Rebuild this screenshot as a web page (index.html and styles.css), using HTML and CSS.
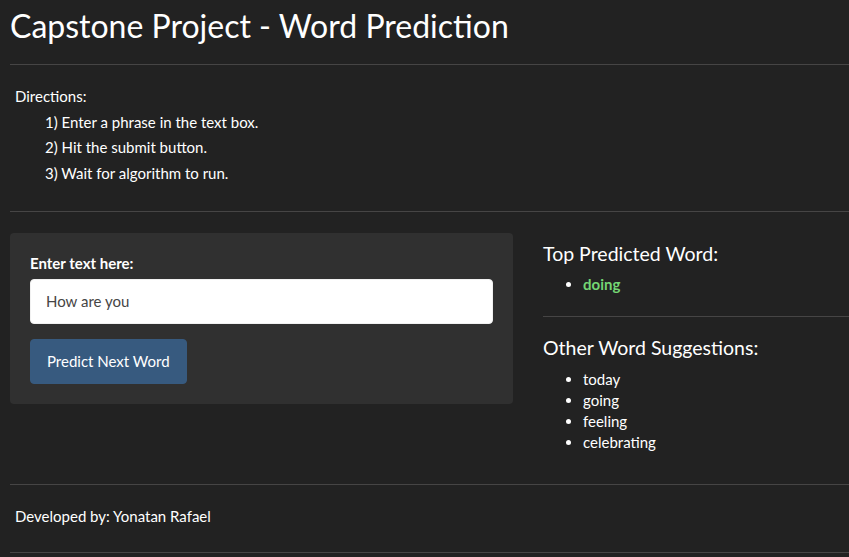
FILE: index.html
```html
<!DOCTYPE html>
<html>
<head>
<meta charset="utf-8">
<title>Capstone Project - Word Prediction</title>
<link rel="stylesheet" href="styles.css">
</head>
<body>
<div class="page">
  <h2 class="title">Capstone Project - Word Prediction</h2>
  <hr class="rule rule-top">
  <div class="directions">
    <div class="line">Directions:</div>
    <div class="line indent">1) Enter a phrase in the text box.</div>
    <div class="line indent">2) Hit the submit button.</div>
    <div class="line indent">3) Wait for algorithm to run.</div>
  </div>
  <hr class="rule rule-mid">
  <div class="row">
    <div class="sidebar">
      <div class="well">
        <div class="form-group">
          <label class="label" for="txt">Enter text here:</label>
          <input id="txt" class="input" type="text" value="How are you">
        </div>
        <button class="btn">Predict Next Word</button>
      </div>
    </div>
    <div class="main">
      <h4 class="heading">Top Predicted Word:</h4>
      <ul class="list list-top">
        <li><span class="top-word">doing</span></li>
      </ul>
      <hr class="rule rule-inner">
      <h4 class="heading">Other Word Suggestions:</h4>
      <ul class="list list-other">
        <li>today</li>
        <li>going</li>
        <li>feeling</li>
        <li>celebrating</li>
      </ul>
    </div>
  </div>
  <hr class="rule rule-foot">
  <div class="footer">Developed by: Yonatan Rafael</div>
  <hr class="rule rule-bottom">
</div>
</body>
</html>
```
FILE: styles.css
```css
html, body {
  margin: 0;
  padding: 0;
  background: #222222;
}
body {
  color: #ffffff;
  font-family: Lato, "Open Sans", "Liberation Sans", sans-serif;
  font-size: 15px;
  line-height: 21px;
}
.page {
  padding-left: 10px;
  overflow: hidden;
  height: 557px;
}
.title {
  font-size: 32px;
  font-weight: 400;
  line-height: 35px;
  margin: 8px 0 0 0;
}
.rule {
  border: 0;
  border-top: 1px solid #464545;
  height: 0;
  margin: 0;
}
.rule-top { margin-top: 21px; }
.directions {
  padding-left: 5px;
  margin-top: 19px;
}
.line {
  line-height: 25.7px;
}
.indent {
  padding-left: 30px;
}
.rule-mid { margin-top: 24px; }
.row {
  display: flex;
  gap: 30px;
  margin-top: 21px;
  align-items: flex-start;
}
.sidebar {
  width: 503px;
  flex: none;
}
.well {
  background: #303030;
  border-radius: 4px;
  padding: 20px 20px;
}
.form-group {
  margin-bottom: 15px;
}
.label {
  display: block;
  font-weight: 700;
  margin-bottom: 5px;
}
.input {
  display: block;
  box-sizing: border-box;
  width: 100%;
  height: 45px;
  padding: 10px 15px;
  border: 1px solid #f1f1f1;
  border-radius: 4px;
  background: #ffffff;
  color: #464545;
  font-family: inherit;
  font-size: 15px;
  line-height: 21px;
  outline: none;
}
.btn {
  display: block;
  height: 45px;
  box-sizing: border-box;
  padding: 10px 16px;
  border: 1px solid #375a7f;
  border-radius: 4px;
  background: #375a7f;
  color: #ffffff;
  font-family: inherit;
  font-size: 15px;
  line-height: 21px;
}
.main {
  flex: 1;
}
.heading {
  font-size: 19.5px;
  font-weight: 400;
  line-height: 21px;
  margin: 10.5px 0 0 0;
}
.list {
  padding-left: 40px;
}
.list-top {
  margin: 9.5px 0 0 0;
}
.list-other {
  margin: 11px 0 10.5px 0;
}
.top-word {
  color: #74d674;
  font-weight: 700;
}
.rule-inner {
  margin: 21px 0 20px 0;
}
.rule-foot { margin-top: 21px; }
.footer {
  padding-left: 5px;
  margin-top: 21px;
}
.rule-bottom { margin-top: 25px; }
```
